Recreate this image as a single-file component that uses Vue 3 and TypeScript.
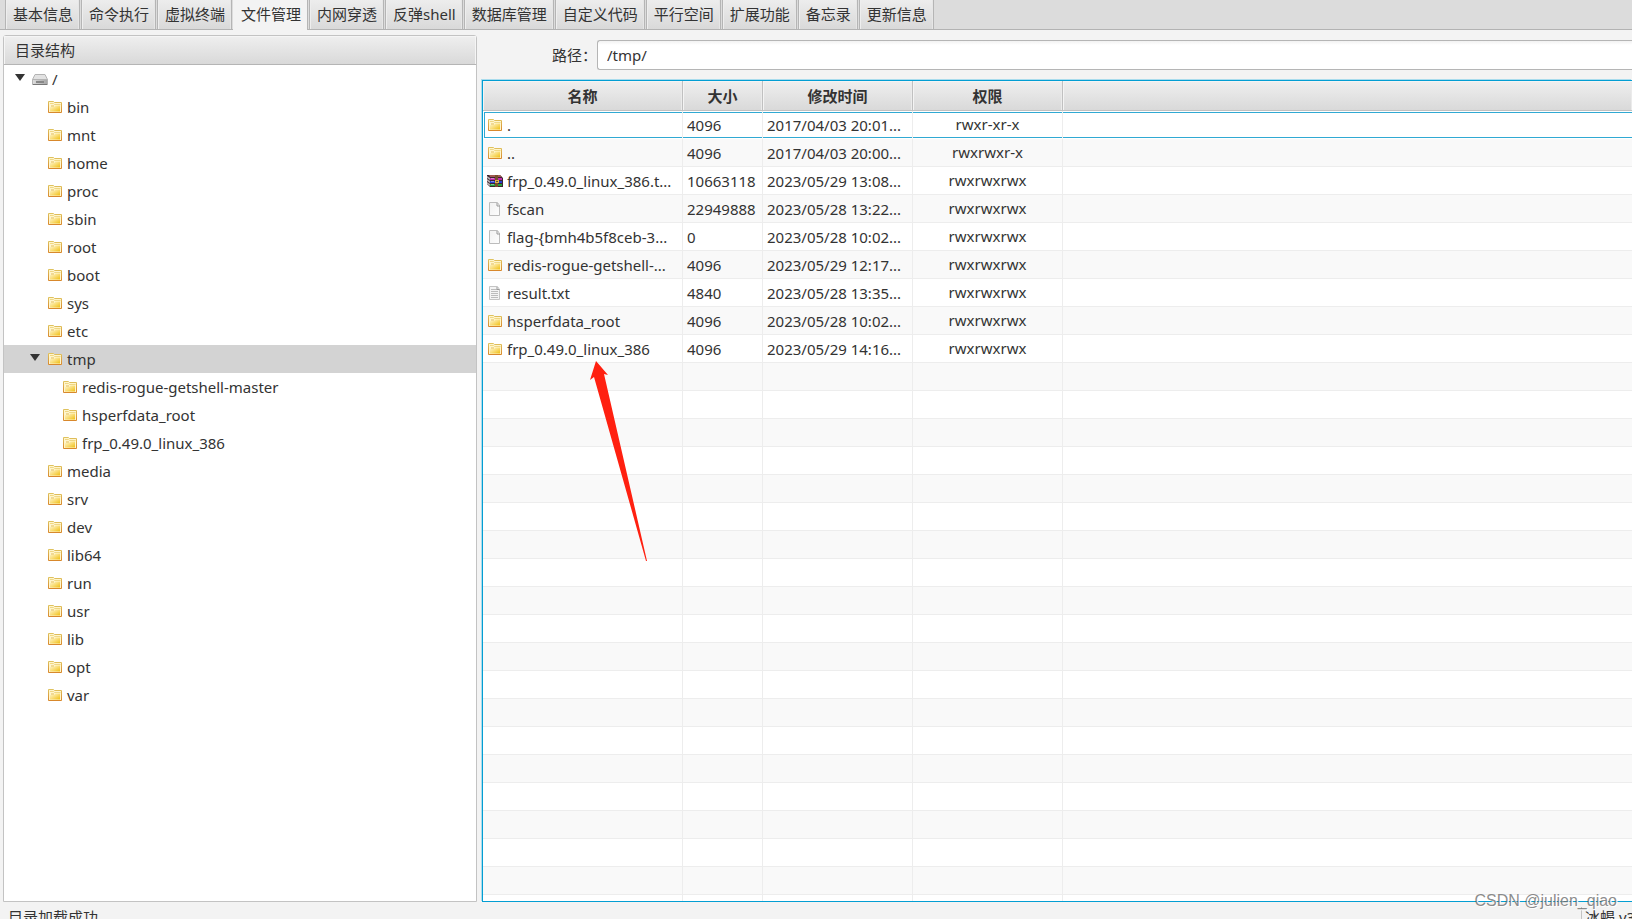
<script setup lang="ts">
import { ref } from 'vue'

type Icon = 'drive' | 'folder' | 'archive' | 'file' | 'text'
interface TreeNode { name: string; depth: number; open?: boolean; icon: Icon }
interface FileRow { name: string; size: string; time: string; perm: string; icon: Icon }

const tabs = ['基本信息', '命令执行', '虚拟终端', '文件管理', '内网穿透', '反弹shell', '数据库管理', '自定义代码', '平行空间', '扩展功能', '备忘录', '更新信息']
const activeTab = ref('文件管理')
const path = ref('/tmp/')
const selected = ref('tmp')

const dir = (name: string, depth = 1, open = false): TreeNode => ({ name, depth, open, icon: 'folder' })
const tree: TreeNode[] = [
  { name: '/', depth: 0, open: true, icon: 'drive' },
  ...['bin', 'mnt', 'home', 'proc', 'sbin', 'root', 'boot', 'sys', 'etc'].map(n => dir(n)),
  dir('tmp', 1, true),
  ...['redis-rogue-getshell-master', 'hsperfdata_root', 'frp_0.49.0_linux_386'].map(n => dir(n, 2)),
  ...['media', 'srv', 'dev', 'lib64', 'run', 'usr', 'lib', 'opt', 'var'].map(n => dir(n)),
]

const columns = ['名称', '大小', '修改时间', '权限']
const files: FileRow[] = [
  { name: '.', size: '4096', time: '2017/04/03 20:01...', perm: 'rwxr-xr-x', icon: 'folder' },
  { name: '..', size: '4096', time: '2017/04/03 20:00...', perm: 'rwxrwxr-x', icon: 'folder' },
  { name: 'frp_0.49.0_linux_386.t...', size: '10663118', time: '2023/05/29 13:08...', perm: 'rwxrwxrwx', icon: 'archive' },
  { name: 'fscan', size: '22949888', time: '2023/05/28 13:22...', perm: 'rwxrwxrwx', icon: 'file' },
  { name: 'flag-{bmh4b5f8ceb-3...', size: '0', time: '2023/05/28 10:02...', perm: 'rwxrwxrwx', icon: 'file' },
  { name: 'redis-rogue-getshell-...', size: '4096', time: '2023/05/29 12:17...', perm: 'rwxrwxrwx', icon: 'folder' },
  { name: 'result.txt', size: '4840', time: '2023/05/28 13:35...', perm: 'rwxrwxrwx', icon: 'text' },
  { name: 'hsperfdata_root', size: '4096', time: '2023/05/28 10:02...', perm: 'rwxrwxrwx', icon: 'folder' },
  { name: 'frp_0.49.0_linux_386', size: '4096', time: '2023/05/29 14:16...', perm: 'rwxrwxrwx', icon: 'folder' },
]
const fillerRows = 20
</script>

<template>
  <div class="app">
    <svg class="defs" width="0" height="0" aria-hidden="true">
      <defs>
        <linearGradient id="gFolder" x1="0" y1="0" x2="1" y2="1">
          <stop offset="0" stop-color="#fff7cf" /><stop offset="0.5" stop-color="#f9dd78" /><stop offset="1" stop-color="#efbf12" />
        </linearGradient>
        <linearGradient id="gEdge" x1="0" y1="0" x2="0" y2="1">
          <stop offset="0" stop-color="#dfc25e" /><stop offset="1" stop-color="#d8882c" />
        </linearGradient>
        <linearGradient id="gDrive" x1="0" y1="0" x2="1" y2="0">
          <stop offset="0" stop-color="#dedede" /><stop offset="1" stop-color="#a4a4a4" />
        </linearGradient>
        <linearGradient id="gPage" x1="0" y1="0" x2="1" y2="1">
          <stop offset="0" stop-color="#f1f1f1" /><stop offset="1" stop-color="#fdfdfd" />
        </linearGradient>
      </defs>
      <symbol id="folder" viewBox="0 0 16 16">
        <path d="M1.5 13.5V2.5H6.5L7.5 3.5H14.5V13.5Z" fill="#fff5cc" stroke="url(#gEdge)" />
        <path d="M3 4.500H6.500L7.500 5.500H13.500" fill="none" stroke="#efd783" />
        <path d="M3 12.500V8H7L8.500 6.500H13V12.500Z" fill="url(#gFolder)" />
        <path d="M4 7H7" stroke="#e3bd58" />
      </symbol>
      <symbol id="drive" viewBox="0 0 16 16">
        <path d="M3 3.500H13L15.500 8.500V13.500H.5V8.500Z" fill="#e2e2e2" stroke="#b4b4b4" />
        <path d="M.5 8.500H15.500V13.500H.5Z" fill="url(#gDrive)" stroke="#b4b4b4" />
        <path d="M4 10H12V12H4Z" fill="#888" />
        <path d="M1 13.500H15" stroke="#777" />
      </symbol>
      <symbol id="archive" viewBox="0 0 16 16">
        <path d="M2 2H13L16 5V14H3L0 11V2Z" fill="#3b2530" />
        <path d="M2 2H13L15 4H3Z" fill="#a05a51" />
        <path d="M3 5H15V7H3Z" fill="#c12ca9" />
        <path d="M3 8H15V10H3Z" fill="#263ed0" />
        <path d="M3 11H15V13H3Z" fill="#24a13b" />
        <path d="M0 3L3 5V7L0 5ZM0 6L3 8V10L0 8ZM0 9L3 11V13L0 11Z" fill="#b9b0b0" />
        <path d="M8 2H11V14H8Z" fill="#794e2c" />
        <path d="M8 7H12V10H8Z" fill="#e1b34c" /><path d="M9 8H11V9H9Z" fill="#553" />
        <path d="M4 5.500H7M4 8.500H7M4 11.500H7" stroke="#eeeeff" opacity=".45" />
      </symbol>
      <symbol id="file" viewBox="0 0 16 16">
        <path d="M2.500 1.500H10.500L12.500 4.500V14.500H2.500Z" fill="url(#gPage)" stroke="#bcbcbc" />
        <path d="M10 2V5H13" fill="none" stroke="#999" />
      </symbol>
      <symbol id="text" viewBox="0 0 16 16">
        <path d="M2.500 1.500H10.500L12.500 4.500V14.500H2.500Z" fill="#f4f4f4" stroke="#c4c4c4" />
        <path d="M4 4.500H10M4 6.500H11M4 8.500H11M4 10.500H11M4 12.500H11" stroke="#bcbcbc" />
        <path d="M10 2V4.500H12.500" fill="none" stroke="#999" />
      </symbol>
    </svg>

    <nav class="tabs" role="tablist">
      <button v-for="t in tabs" :key="t" type="button" role="tab" class="tab" :class="{ active: t === activeTab }" :aria-selected="t === activeTab" @click="activeTab = t">{{ t }}</button>
    </nav>

    <main class="body">
      <section class="side">
        <h2 class="side-title">目录结构</h2>
        <ul class="tree" role="tree">
          <li v-for="n in tree" :key="n.name" role="treeitem" class="node" :class="['d' + n.depth, { selected: n.name === selected }]" :aria-selected="n.name === selected" @click="selected = n.name">
            <svg class="twist" viewBox="0 0 10 7" aria-hidden="true"><path v-if="n.open" d="M0 0H10L5 7Z" fill="#333" /></svg>
            <svg class="icon" aria-hidden="true"><use :href="'#' + n.icon" /></svg>
            <span>{{ n.name }}</span>
          </li>
        </ul>
      </section>

      <section class="content">
        <div class="path-row">
          <label for="path">路径：</label>
          <input id="path" v-model="path" type="text" />
        </div>
        <div class="grid">
          <table>
            <colgroup><col class="c-name" /><col class="c-size" /><col class="c-time" /><col class="c-perm" /><col /></colgroup>
            <thead>
              <tr><th v-for="c in columns" :key="c" scope="col">{{ c }}</th><td class="head-rest"></td></tr>
            </thead>
            <tbody>
              <tr v-for="(f, i) in files" :key="f.name" :class="{ focused: i === 0 }">
                <td><div class="cell name"><svg class="icon" aria-hidden="true"><use :href="'#' + f.icon" /></svg><span>{{ f.name }}</span></div></td>
                <td><div class="cell">{{ f.size }}</div></td>
                <td><div class="cell">{{ f.time }}</div></td>
                <td><div class="cell perm">{{ f.perm }}</div></td>
                <td><div class="cell"></div></td>
              </tr>
              <tr v-for="n in fillerRows" :key="'empty' + n"><td v-for="c in 5" :key="c"></td></tr>
            </tbody>
          </table>
        </div>
      </section>
    </main>

    <footer class="status">
      <span>目录加载成功</span>
      <span class="version">冰蝎 v3</span>
    </footer>

    <svg class="arrow" width="58" height="201" viewBox="0 0 58 201" aria-hidden="true">
      <path d="M6 0L18 14L14 13L57 200L56 200L4 16L0 19Z" fill="#ff2010" />
    </svg>
    <div class="watermark">CSDN @julien_qiao</div>
  </div>
</template>

<style>
body { margin: 0; overflow: hidden; }
</style>

<style scoped>
* { box-sizing: border-box; }
.app {
  position: relative;
  display: flex;
  flex-direction: column;
  height: 100vh;
  overflow: hidden;
  background: #f3f3f3;
  color: #333;
  font-family: "Noto Sans", "Noto Sans CJK SC", sans-serif;
  font-size: 15px;
  line-height: 20px;
}
.defs { position: absolute; }
.tabs {
  display: flex;
  flex: none;
  gap: 1px;
  height: 30px;
  padding-left: 5px;
  background: #dcdcdc;
  border-bottom: 1px solid #b3b3b3;
}
.tab {
  flex: none;
  height: 29px;
  padding: 0 6px 2px 7px;
  border: 0;
  border-left: 1px solid #b5b5b5;
  border-right: 1px solid #b5b5b5;
  background: linear-gradient(#ededed, #d9d9d9);
  box-shadow: inset 1px 0 #eee, inset -1px 0 #e6e6e6;
  color: inherit;
  font: inherit;
  line-height: 26px;
  white-space: nowrap;
}
.tab.active { height: 30px; padding-bottom: 3px; background: #f3f3f3; box-shadow: none; border-left-color: #f3f3f3; }
.body { display: flex; flex: 1; min-height: 0; gap: 5px; padding-left: 3px; }
.side {
  display: flex;
  flex-direction: column;
  flex: 0 0 474px;
  margin-top: 5px;
  border: 1px solid #c3c3c3;
  border-radius: 3px 3px 0 0;
  background: #fff;
}
.side-title {
  flex: none;
  height: 29px;
  margin: 0;
  padding-left: 11px;
  border-bottom: 1px solid #b5b5b5;
  background: linear-gradient(#efefef, #d9d9d9);
  box-shadow: inset 1px 1px #f5f5f5, inset -1px 0 #f5f5f5;
  font: inherit;
  line-height: 28px;
}
.tree { margin: 0; padding: 0; list-style: none; }
.node { display: flex; align-items: center; height: 28px; padding-left: 11px; cursor: default; }
.node.d1 { padding-left: 26px; }
.node.d2 { padding-left: 41px; }
.node.selected { background: #d3d3d3; }
.twist { width: 10px; height: 7px; margin-right: 7px; margin-bottom: 3px; }
.icon { flex: none; width: 16px; height: 16px; margin-right: 4px; }
.content { display: flex; flex: 1; flex-direction: column; min-width: 0; }
.path-row { display: flex; flex: none; align-items: center; height: 49px; padding: 1px 0 0 70px; }
.path-row label { flex: none; width: 45px; white-space: nowrap; }
.path-row input {
  flex: 1;
  min-width: 0;
  height: 30px;
  padding: 0 9px;
  border: 1px solid #b5b5b5;
  border-right: 0;
  border-radius: 3px 0 0 3px;
  background: linear-gradient(#f2f2f2, #fff 4px);
  color: inherit;
  font: inherit;
  outline: 0;
}
.grid {
  flex: 1;
  min-height: 0;
  overflow: hidden;
  border: 1px solid #039ed3;
  border-right: 0;
  margin-top: 1px;
  background: #fff;
  box-shadow: -1px -1px #a9dced;
}
table { width: 100%; border-collapse: separate; border-spacing: 0; table-layout: fixed; }
.c-name { width: 200px; }
.c-size { width: 80px; }
.c-time, .c-perm { width: 150px; }
th, .head-rest {
  height: 30px;
  padding: 0;
  border-right: 1px solid #c0c0c0;
  border-bottom: 1px solid #c0c0c0;
  background: linear-gradient(#efefef, #d9d9d9);
  box-shadow: inset 1px 1px #f4f4f4, inset -1px 0 #ebebeb;
  font-weight: 700;
}
tbody td { height: 28px; padding: 0; border-right: 1px solid #ededed; border-bottom: 1px solid #ededed; }
tr > td:last-child { border-right: 0; }
tbody tr:nth-child(even) { background: #f9f9f9; }
.focused td { border-bottom-color: #fff; }
.cell { display: flex; align-items: center; height: 26px; padding-left: 4px; white-space: nowrap; }
.perm { justify-content: center; padding: 0 0 1px; }
.focused .cell { border-top: 1px solid #30a9d3; border-bottom: 1px solid #30a9d3; }
.focused .name { margin-left: 1px; padding-left: 2px; border-left: 1px solid #30a9d3; }
.status { display: flex; flex: none; justify-content: space-between; height: 17px; padding: 5px 0 0 8px; overflow: hidden; line-height: 20px; white-space: nowrap; }
.version { width: 51px; height: 20px; padding-left: 3px; border-left: 1px solid #c3c3c3; overflow: hidden; }
.arrow { position: absolute; left: 590px; top: 361px; }
.watermark {
  position: absolute;
  right: 15px;
  bottom: 7px;
  color: rgba(110, 110, 110, 0.8);
  font: 16px/22px "Liberation Sans", Arial, sans-serif;
  text-shadow: 1px 1px #fff;
}
</style>
